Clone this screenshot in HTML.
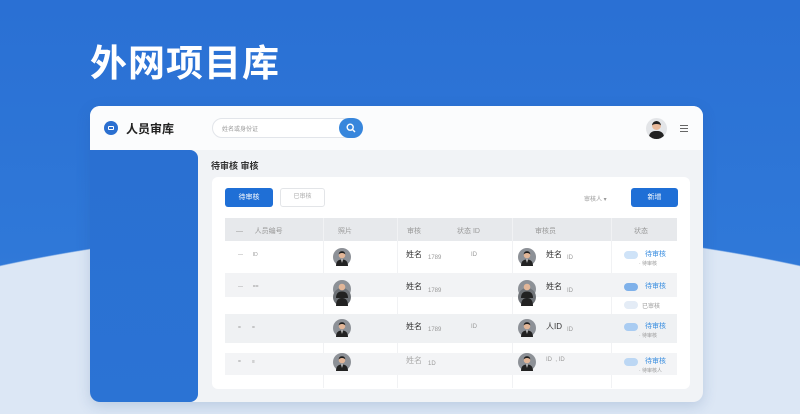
<!DOCTYPE html>
<html style="width:800px;height:414px;overflow:hidden"><head><meta charset="utf-8">
<style>
*{margin:0;padding:0;box-sizing:border-box}
body{width:800px;height:414px;overflow:hidden;position:relative;font-family:"Liberation Sans","Noto Sans CJK SC",sans-serif;background:radial-gradient(ellipse 800px 300px at 400px 525px,#dce7f5 99.6%,rgba(220,231,245,0) 100%),linear-gradient(180deg,#2a70d4 0%,#2f78d8 60%,#3b82dc 100%)}
.a{position:absolute}
.title{left:90px;top:33px;color:#fff;font-size:37px;font-weight:bold;letter-spacing:1px}
.card{left:90px;top:106px;width:613px;height:296px;background:#f1f3f6;border-radius:10px;box-shadow:0 4px 14px rgba(40,80,140,.18);overflow:hidden}
.hdr{left:0;top:0;width:613px;height:44px;background:#fbfcfd}
.side{left:0;top:44px;width:108px;height:252px;background:linear-gradient(180deg,#2a70d2,#2b73d4);border-radius:0 8px 8px 8px}
.t{color:#999;font-size:7px}
.panel{left:122px;top:71px;width:478px;height:212px;background:#fff;border-radius:6px}
.row{left:13px;width:452px}
</style></head><body>
<div class="a title">外网项目库</div>
<div class="a card">
 <div class="a hdr">
  <div class="a" style="left:14px;top:15px;width:14px;height:14px;border-radius:50%;background:#2b6fd0"><div class="a" style="left:4px;top:5px;width:6px;height:4px;border:1px solid #fff;border-radius:1px"></div></div>
  <div class="a" style="left:36px;top:14px;font-size:12px;font-weight:bold;color:#222">人员审库</div>
  <div class="a" style="left:122px;top:12px;width:150px;height:20px;border:1px solid #e2e5ea;border-radius:10px;background:#fff"><span class="a t" style="left:9px;top:5px;font-size:6px">姓名或身份证</span></div>
  <div class="a" style="left:249px;top:12px;width:24px;height:20px;border-radius:10px;background:#3786dc"><svg class="a" style="left:7px;top:5px" width="10" height="10" viewBox="0 0 10 10"><circle cx="4.2" cy="4.2" r="3" fill="none" stroke="#fff" stroke-width="1.4"/><path d="M6.4 6.4L9 9" stroke="#fff" stroke-width="1.4"/></svg></div>
  <div class="a" style="left:556px;top:12px;width:21px;height:21px;border-radius:50%;background:#e3e5e8;overflow:hidden"><div class="a" style="left:6px;top:3px;width:9px;height:9px;border-radius:50%;background:#e9b99a;border-top:3px solid #222"></div><div class="a" style="left:3px;top:13px;width:15px;height:10px;border-radius:6px 6px 0 0;background:#222"></div></div>
  <div class="a" style="left:590px;top:19px;width:8px;height:7px;border-top:1px solid #666;border-bottom:1px solid #666"><div style="margin-top:2px;height:1px;background:#666"></div></div>
 </div>
 <div class="a side"></div>
 <div class="a" style="left:121px;top:53px;font-size:9px;font-weight:bold;color:#333">待审核 审核</div>
 <div class="a panel">
  <div class="a" style="left:13px;top:11px;width:48px;height:19px;background:#1f6fd6;border-radius:3px;color:#fff;font-size:7px;text-align:center;line-height:19px">待审核</div>
  <div class="a" style="left:68px;top:11px;width:45px;height:19px;border:1px solid #e3e5e8;border-radius:3px;color:#aaa;font-size:6px;text-align:center;line-height:17px">已审核</div>
  <div class="a t" style="left:372px;top:17px;font-size:6px">审核人 ▾</div>
  <div class="a" style="left:419px;top:11px;width:47px;height:19px;background:#1f6fd6;border-radius:3px;color:#fff;font-size:7px;text-align:center;line-height:19px">新增</div>
  <div class="a row" style="top:41px;height:23px;background:#e7e9ec"></div>
  <div class="a t" style="left:24px;top:49px">—&nbsp;&nbsp;&nbsp;&nbsp;&nbsp;&nbsp;人员编号</div>
  <div class="a t" style="left:126px;top:49px">照片</div>
  <div class="a t" style="left:195px;top:49px">审核</div>
  <div class="a t" style="left:245px;top:49px">状态 ID</div>
  <div class="a t" style="left:323px;top:49px">审核员</div>
  <div class="a t" style="left:422px;top:49px">状态</div>
  <div class="a" style="left:111px;top:41px;width:1px;height:170px;background:#f1f2f4"></div>
  <div class="a" style="left:185px;top:41px;width:1px;height:170px;background:#f1f2f4"></div>
  <div class="a" style="left:300px;top:41px;width:1px;height:170px;background:#f1f2f4"></div>
  <div class="a" style="left:399px;top:41px;width:1px;height:170px;background:#f1f2f4"></div>
  <div class="a row" style="top:96px;height:24px;background:#f2f3f5"></div>
  <div class="a row" style="top:137px;height:29px;background:#eff1f3"></div>
  <div class="a row" style="top:176px;height:22px;background:#f3f4f6"></div>
  <div class="a" style="left:121px;top:71px"><svg width="18" height="18" viewBox="0 0 18 18"><circle cx="9" cy="9" r="9" fill="#8d9197"/><circle cx="9" cy="7" r="3.3" fill="#e2b698"/><path d="M5.6 6.5Q6 3 9 3.2Q12 3 12.4 6.5Q11 4.8 9 5Q7 4.8 5.6 6.5Z" fill="#1d1d1d"/><path d="M3 18Q3 11.5 9 11.5Q15 11.5 15 18Z" fill="#222"/><path d="M8.2 11.5L9 15L9.8 11.5Z" fill="#fff"/></svg></div>
  <div class="a" style="left:306px;top:71px"><svg width="18" height="18" viewBox="0 0 18 18"><circle cx="9" cy="9" r="9" fill="#8d9197"/><circle cx="9" cy="7" r="3.3" fill="#e2b698"/><path d="M5.6 6.5Q6 3 9 3.2Q12 3 12.4 6.5Q11 4.8 9 5Q7 4.8 5.6 6.5Z" fill="#1d1d1d"/><path d="M3 18Q3 11.5 9 11.5Q15 11.5 15 18Z" fill="#222"/><path d="M8.2 11.5L9 15L9.8 11.5Z" fill="#fff"/></svg></div>
  <div class="a" style="left:121px;top:103px"><svg width="18" height="26" viewBox="0 0 18 26"><circle cx="9" cy="9" r="9" fill="#8d9197"/><circle cx="9" cy="17" r="9" fill="#6f7378"/><circle cx="9" cy="7" r="3.3" fill="#e2b698"/><path d="M3 18Q3 11.5 9 11.5Q15 11.5 15 18Z" fill="#222"/><path d="M3 26Q3 18 9 18Q15 18 15 26Z" fill="#222"/></svg></div>
  <div class="a" style="left:306px;top:103px"><svg width="18" height="26" viewBox="0 0 18 26"><circle cx="9" cy="9" r="9" fill="#8d9197"/><circle cx="9" cy="17" r="9" fill="#6f7378"/><circle cx="9" cy="7" r="3.3" fill="#e2b698"/><path d="M3 18Q3 11.5 9 11.5Q15 11.5 15 18Z" fill="#222"/><path d="M3 26Q3 18 9 18Q15 18 15 26Z" fill="#222"/></svg></div>
  <div class="a" style="left:121px;top:142px"><svg width="18" height="18" viewBox="0 0 18 18"><circle cx="9" cy="9" r="9" fill="#8d9197"/><circle cx="9" cy="7" r="3.3" fill="#e2b698"/><path d="M5.6 6.5Q6 3 9 3.2Q12 3 12.4 6.5Q11 4.8 9 5Q7 4.8 5.6 6.5Z" fill="#1d1d1d"/><path d="M3 18Q3 11.5 9 11.5Q15 11.5 15 18Z" fill="#222"/><path d="M8.2 11.5L9 15L9.8 11.5Z" fill="#fff"/></svg></div>
  <div class="a" style="left:306px;top:142px"><svg width="18" height="18" viewBox="0 0 18 18"><circle cx="9" cy="9" r="9" fill="#8d9197"/><circle cx="9" cy="7" r="3.3" fill="#e2b698"/><path d="M5.6 6.5Q6 3 9 3.2Q12 3 12.4 6.5Q11 4.8 9 5Q7 4.8 5.6 6.5Z" fill="#1d1d1d"/><path d="M3 18Q3 11.5 9 11.5Q15 11.5 15 18Z" fill="#222"/><path d="M8.2 11.5L9 15L9.8 11.5Z" fill="#fff"/></svg></div>
  <div class="a" style="left:121px;top:176px"><svg width="18" height="18" viewBox="0 0 18 18"><circle cx="9" cy="9" r="9" fill="#8d9197"/><circle cx="9" cy="7" r="3.3" fill="#e2b698"/><path d="M5.6 6.5Q6 3 9 3.2Q12 3 12.4 6.5Q11 4.8 9 5Q7 4.8 5.6 6.5Z" fill="#1d1d1d"/><path d="M3 18Q3 11.5 9 11.5Q15 11.5 15 18Z" fill="#222"/><path d="M8.2 11.5L9 15L9.8 11.5Z" fill="#fff"/></svg></div>
  <div class="a" style="left:306px;top:176px"><svg width="18" height="18" viewBox="0 0 18 18"><circle cx="9" cy="9" r="9" fill="#8d9197"/><circle cx="9" cy="7" r="3.3" fill="#e2b698"/><path d="M5.6 6.5Q6 3 9 3.2Q12 3 12.4 6.5Q11 4.8 9 5Q7 4.8 5.6 6.5Z" fill="#1d1d1d"/><path d="M3 18Q3 11.5 9 11.5Q15 11.5 15 18Z" fill="#222"/><path d="M8.2 11.5L9 15L9.8 11.5Z" fill="#fff"/></svg></div>
  <div class="a" style="left:194px;top:72px;font-size:8px;color:#333">姓名</div><div class="a t" style="left:216px;top:78px;font-size:6px">1789</div><div class="a t" style="left:259px;top:75px;font-size:6px">ID</div>
  <div class="a" style="left:334px;top:72px;font-size:8px;color:#333">姓名</div><div class="a t" style="left:355px;top:78px;font-size:6px">ID</div>
  <div class="a" style="left:194px;top:104px;font-size:8px;color:#333">姓名</div><div class="a t" style="left:216px;top:111px;font-size:6px">1789</div>
  <div class="a" style="left:334px;top:104px;font-size:8px;color:#333">姓名</div><div class="a t" style="left:355px;top:111px;font-size:6px">ID</div>
  <div class="a" style="left:194px;top:144px;font-size:8px;color:#333">姓名</div><div class="a t" style="left:216px;top:150px;font-size:6px">1789</div><div class="a t" style="left:259px;top:147px;font-size:6px">ID</div>
  <div class="a" style="left:334px;top:144px;font-size:8px;color:#333">人ID</div><div class="a t" style="left:355px;top:150px;font-size:6px">ID</div>
  <div class="a" style="left:194px;top:178px;font-size:8px;color:#aaa">姓名</div><div class="a t" style="left:216px;top:184px;font-size:6px">1D</div>
  <div class="a t" style="left:334px;top:180px;font-size:6px">ID&nbsp;&nbsp;, ID</div>
  <div class="a t" style="left:26px;top:75px;font-size:5px">— &nbsp;&nbsp;&nbsp;&nbsp;&nbsp; ID</div>
  <div class="a t" style="left:26px;top:107px;font-size:5px">— &nbsp;&nbsp;&nbsp;&nbsp;&nbsp; ==</div>
  <div class="a t" style="left:26px;top:148px;font-size:5px">= &nbsp;&nbsp;&nbsp;&nbsp;&nbsp;&nbsp; =</div>
  <div class="a t" style="left:26px;top:182px;font-size:5px">= &nbsp;&nbsp;&nbsp;&nbsp;&nbsp;&nbsp; ≡</div>
  <div class="a" style="left:412px;top:74px;width:14px;height:8px;border-radius:4px;background:#cfe3f8"></div><div class="a" style="left:433px;top:72px;font-size:7px;color:#3a8ee0">待审核</div><div class="a t" style="left:427px;top:83px;font-size:5px">· 待审核</div>
  <div class="a" style="left:412px;top:106px;width:14px;height:8px;border-radius:4px;background:#7fb1ea"></div><div class="a" style="left:433px;top:104px;font-size:7px;color:#3a8ee0">待审核</div>
  <div class="a" style="left:412px;top:124px;width:14px;height:8px;border-radius:4px;background:#e4ecf6"></div><div class="a t" style="left:430px;top:124px;font-size:6px">已审核</div>
  <div class="a" style="left:412px;top:146px;width:14px;height:8px;border-radius:4px;background:#a9ccf2"></div><div class="a" style="left:433px;top:144px;font-size:7px;color:#3a8ee0">待审核</div><div class="a t" style="left:427px;top:155px;font-size:5px">· 待审核</div>
  <div class="a" style="left:412px;top:181px;width:14px;height:8px;border-radius:4px;background:#bcd7f4"></div><div class="a" style="left:433px;top:179px;font-size:7px;color:#3a8ee0">待审核</div><div class="a t" style="left:427px;top:190px;font-size:5px">· 待审核人</div>
 </div>
</div>
</body></html>
